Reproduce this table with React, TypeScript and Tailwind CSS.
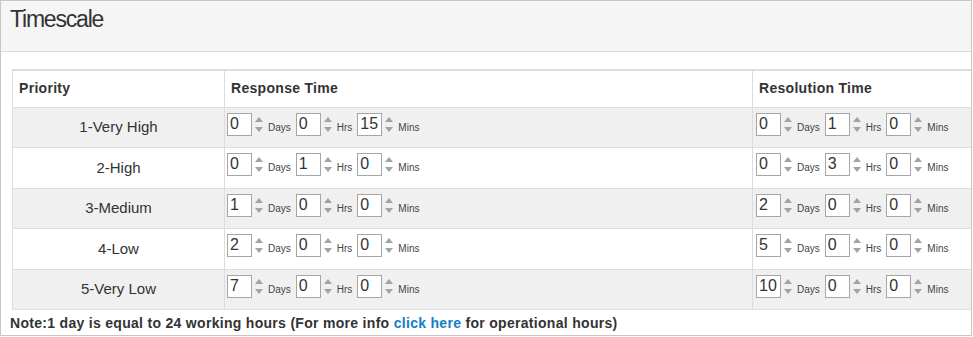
import React from "react";

type Unit = { value: string; label: string };

const rows: { name: string; response: string[]; resolution: string[] }[] = [
  { name: "1-Very High", response: ["0", "0", "15"], resolution: ["0", "1", "0"] },
  { name: "2-High", response: ["0", "1", "0"], resolution: ["0", "3", "0"] },
  { name: "3-Medium", response: ["1", "0", "0"], resolution: ["2", "0", "0"] },
  { name: "4-Low", response: ["2", "0", "0"], resolution: ["5", "0", "0"] },
  { name: "5-Very Low", response: ["7", "0", "0"], resolution: ["10", "0", "0"] },
];

const labels = ["Days", "Hrs", "Mins"];

function Arrows() {
  return (
    <span className="ml-[1px] flex w-[12px] flex-col items-center gap-[5px] self-center">
      <svg width="8" height="5" viewBox="0 0 8 5">
        <polygon points="0,5 4,0 8,5" fill="#a3a3a3" />
      </svg>
      <svg width="8" height="5" viewBox="0 0 8 5">
        <polygon points="0,0 8,0 4,5" fill="#a3a3a3" />
      </svg>
    </span>
  );
}

function Spinner({ value, label }: Unit) {
  return (
    <span className="flex items-start">
      <span className="flex h-[23px] items-start">
        <span className="box-border h-[23px] w-[25px] border border-[#a6a6a6] bg-white pl-[2px] text-[16px] leading-[20px] text-[#333]">
          {value}
        </span>
        <Arrows />
      </span>
      <span className="ml-[3px] mr-[5px] mt-[9px] text-[10px] leading-[12px] text-[#444]">{label}</span>
    </span>
  );
}

function TimeCell({ values, wide }: { values: string[]; wide?: boolean }) {
  return (
    <div className={`flex items-start border-l border-[#dddddd] pt-[5px] ${wide ? "pl-[3px]" : "pl-[2px]"}`}>
      {values.map((v, i) => (
        <Spinner key={i} value={v} label={labels[i]} />
      ))}
    </div>
  );
}

export default function App() {
  return (
    <div
      className="h-[337px] w-[973px] overflow-hidden bg-white"
      style={{ fontFamily: '"Liberation Sans", Arial, sans-serif' }}
    >
      <div className="box-border h-[336px] w-[972px] overflow-hidden border border-[#c6c6c6] bg-white">
        <div className="box-border h-[51px] border-b border-[#dcdcdc] bg-[#f5f5f5] pl-[9px] pt-[5px]">
          <h2 className="text-[23px] font-normal leading-[26px] tracking-[-1.2px] text-[#333]">Timescale</h2>
        </div>

        <div className="pl-[11px] pt-[17px]">
          <div className="w-[980px] border-t-2 border-l border-[#dddddd]">
            <div className="box-border grid h-[37px] grid-cols-[211px_528px_1fr] border-b border-[#dddddd] bg-white text-[14px] font-bold tracking-[0.3px] text-[#333]">
              <div className="pl-[6px] pt-[9px] leading-[16px]">Priority</div>
              <div className="border-l border-[#dddddd] pl-[6px] pt-[9px] leading-[16px]">Response Time</div>
              <div className="border-l border-[#dddddd] pl-[6px] pt-[9px] leading-[16px]">Resolution Time</div>
            </div>
            {rows.map((r, i) => (
              <div
                key={r.name}
                className={`box-border grid h-[40.4px] grid-cols-[211px_528px_1fr] border-b border-[#dddddd] ${
                  i % 2 === 0 ? "bg-[#f0f0f0]" : "bg-white"
                }`}
              >
                <div className="flex items-center justify-center text-[15px] text-[#333]">{r.name}</div>
                <TimeCell values={r.response} />
                <TimeCell values={r.resolution} wide />
              </div>
            ))}
          </div>
          <p className="-ml-[2px] mt-[3px] text-[14px] font-bold leading-[20px] tracking-[0.3px] text-[#333]">
            Note:1 day is equal to 24 working hours (For more info{" "}
            <a href="#" className="text-[#1580c6] no-underline">
              click here
            </a>{" "}
            for operational hours)
          </p>
        </div>
      </div>
    </div>
  );
}
